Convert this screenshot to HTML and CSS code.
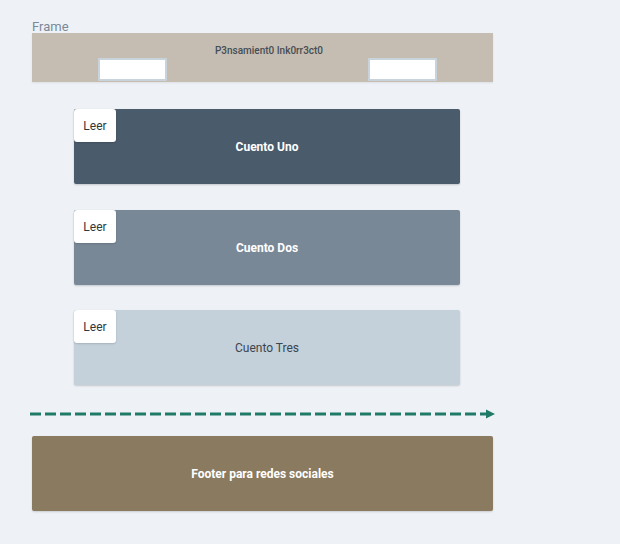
FILE: index.html
```html
<!DOCTYPE html>
<html lang="es">
<head>
<meta charset="utf-8">
<title>Frame</title>
<link rel="stylesheet" href="styles.css">
</head>
<body>
<div class="canvas">
  <div class="frame-label">Frame</div>
  <header class="header">
    <div class="title">P3nsamient0 Ink0rr3ct0</div>
    <div class="inputs">
      <input class="field" type="text">
      <input class="field" type="text">
    </div>
  </header>
  <main class="cards">
    <section class="card card-uno">
      <button class="leer">Leer</button>
      <span class="card-title">Cuento Uno</span>
    </section>
    <section class="card card-dos">
      <button class="leer">Leer</button>
      <span class="card-title">Cuento Dos</span>
    </section>
    <section class="card card-tres">
      <button class="leer">Leer</button>
      <span class="card-title">Cuento Tres</span>
    </section>
  </main>
  <div class="arrow">
    <svg width="466" height="12" viewBox="0 0 466 12">
      <line x1="0" y1="6" x2="456" y2="6" stroke="#207a68" stroke-width="3" stroke-dasharray="11 4"/>
      <path d="M456 1.5 L465 6 L456 10.5 Z" fill="#207a68"/>
    </svg>
  </div>
  <footer class="footer">Footer para redes sociales</footer>
</div>
</body>
</html>
```
FILE: styles.css
```css
html, body {
  margin: 0;
  padding: 0;
  background: #eef2f6;
}
body {
  font-family: Roboto, "Liberation Sans", sans-serif;
  width: 620px;
  height: 544px;
  overflow: hidden;
}
.canvas {
  padding: 20px 0 0 32px;
  display: flex;
  flex-direction: column;
}
.frame-label {
  font-size: 13px;
  line-height: 13px;
  color: #7b8898;
  height: 13px;
  font-weight: 400;
}
.header {
  width: 461px;
  height: 49px;
  background: #c5bdb1;
  box-shadow: 0 1px 2px rgba(0,0,0,0.08);
  display: flex;
  flex-direction: column;
  align-items: center;
  box-sizing: border-box;
  padding-top: 12px;
}
.title {
  font-size: 10px;
  font-weight: 500;
  color: #454d55;
  line-height: 12px;
  margin-left: 13px;
}
.inputs {
  display: flex;
  gap: 201px;
  margin-top: 1px;
  align-self: flex-start;
  padding-left: 66px;
}
.field {
  width: 69px;
  height: 23px;
  box-sizing: border-box;
  border: 2px solid #c9d3db;
  background: #fff;
  margin: 0;
  padding: 0;
  border-radius: 1px;
}
.cards {
  display: flex;
  flex-direction: column;
  gap: 26px;
  margin: 27px 0 0 42px;
}
.card {
  position: relative;
  width: 386px;
  height: 75px;
  border-radius: 2px;
  box-shadow: 0 1px 2px rgba(0,0,0,0.18);
  display: flex;
  align-items: center;
  justify-content: center;
}
.card-uno { background: #4a5b6b; }
.card-dos { background: #798897; }
.card-tres { background: #c4d0da; }
.cards .card-tres { margin-top: -1px; }
.leer {
  position: absolute;
  left: 0;
  top: 0;
  width: 42px;
  height: 33px;
  background: #fff;
  border: none;
  border-radius: 3px;
  box-shadow: 0 1px 2px rgba(0,0,0,0.15);
  font-family: Roboto, "Liberation Sans", sans-serif;
  font-size: 12px;
  color: #2f3740;
  padding: 0;
  text-align: center;
}
.card-title {
  font-size: 12px;
  font-weight: 700;
  color: #ffffff;
}
.card-tres .card-title {
  font-weight: 400;
  color: #3a4550;
  font-size: 12px;
}
.arrow {
  margin: 23px 0 0 -2px;
  height: 12px;
  line-height: 0;
}
.footer {
  margin-top: 16px;
  width: 461px;
  height: 75px;
  background: #8a7a5f;
  border-radius: 2px;
  box-shadow: 0 1px 2px rgba(0,0,0,0.15);
  display: flex;
  align-items: center;
  justify-content: center;
  color: #fff;
  font-size: 12px;
  font-weight: 700;
}
```
